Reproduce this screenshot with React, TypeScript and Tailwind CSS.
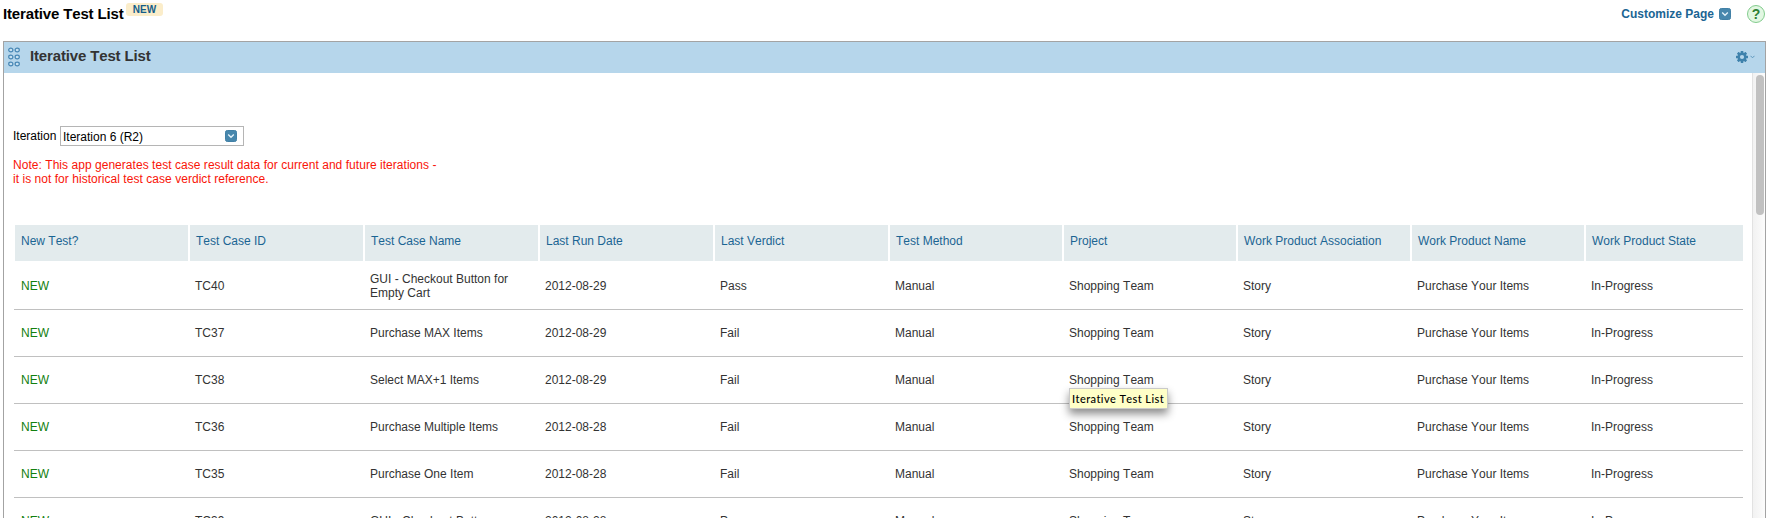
import React from "react";

const columns: [string, string][] = [
  ["New Test?", "w-[175px]"],
  ["Test Case ID", "w-[175px]"],
  ["Test Case Name", "w-[175px]"],
  ["Last Run Date", "w-[175px]"],
  ["Last Verdict", "w-[175px]"],
  ["Test Method", "w-[174px]"],
  ["Project", "w-[174px]"],
  ["Work Product Association", "w-[174px]"],
  ["Work Product Name", "w-[174px]"],
  ["Work Product State", "w-[159px]"],
];

const tests = [
  ["TC40", "GUI - Checkout Button for Empty Cart", "2012-08-29", "Pass"],
  ["TC37", "Purchase MAX Items", "2012-08-29", "Fail"],
  ["TC38", "Select MAX+1 Items", "2012-08-29", "Fail"],
  ["TC36", "Purchase Multiple Items", "2012-08-28", "Fail"],
  ["TC35", "Purchase One Item", "2012-08-28", "Fail"],
  ["TC39", "GUI - Checkout Button", "2012-08-28", "Pass"],
];

function DropIcon() {
  return (
    <svg width="12" height="12" viewBox="0 0 12 12" className="shrink-0">
      <rect x="0.5" y="0.5" width="11" height="11" rx="1.8" fill="#4787ad" stroke="#4180a6" />
      <path d="M3.2 4.6 6 7.2 8.8 4.6" fill="none" stroke="#e4f2fa" strokeWidth="1.4" />
    </svg>
  );
}

function Grip() {
  return (
    <svg width="12" height="20" viewBox="0 0 12 20" className="shrink-0">
      {[3, 10, 17].map((y) =>
        [2.8, 9.2].map((x) => (
          <ellipse key={`${x}-${y}`} cx={x} cy={y} rx="2.1" ry="1.8" fill="#c7e0f0" stroke="#4787b5" strokeWidth="1.2" />
        ))
      )}
    </svg>
  );
}

function Gear() {
  return (
    <svg width="12" height="12" viewBox="0 0 12 12" className="shrink-0">
      <g fill="#3f82ac">
        {[0, 45, 90, 135].map((a) => (
          <rect key={a} x="4.7" y="0" width="2.6" height="12" rx="0.4" transform={`rotate(${a} 6 6)`} />
        ))}
        <circle cx="6" cy="6" r="4.5" />
      </g>
      <circle cx="6" cy="6" r="2.1" fill="#b6d6eb" />
    </svg>
  );
}

export default function App() {
  return (
    <div className="h-[518px] w-[1769px] overflow-hidden bg-white font-['Liberation_Sans',Arial,sans-serif] text-[12px] leading-[14px] text-[#333] [font-kerning:none]">
      <header className="flex h-[41px] items-start pl-[3px] pr-[4px]">
        <h1 className="mt-[6px] w-[120px] text-[15px] leading-[16px] font-bold tracking-[-0.15px] whitespace-nowrap text-black">Iterative Test List</h1>
        <span className="mt-[3px] ml-[3px] flex h-[13px] w-[37px] items-center justify-center rounded-[3px] bg-[#fbedca] text-[10px] font-bold text-[#155d89]">
          NEW
        </span>
        <div className="ml-auto flex h-[28px] items-center">
          <span className="mr-[5px] text-[12px] font-bold text-[#1b6593]">Customize Page</span>
          <DropIcon />
          <span className="mb-[1px] ml-[16px] flex size-[18px] items-center justify-center rounded-full border border-[#83cc8d] bg-[#e2f7e2] text-[14px] font-bold text-[#2f7f35]">
            ?
          </span>
        </div>
      </header>

      <section className="ml-[3px] flex h-[477px] w-[1763px] flex-col border border-b-0 border-[#a3a3a3]">
        <div className="flex h-[31px] shrink-0 items-center bg-[#b6d6eb] pr-[10px] pb-[2px] pl-[4px]">
          <Grip />
          <h2 className="ml-[10px] pb-[1px] text-[15px] font-bold tracking-[-0.15px] text-[#333]">Iterative Test List</h2>
          <div className="ml-auto flex items-center gap-[2px]">
            <Gear />
            <svg width="5" height="4" viewBox="0 0 5 4">
              <path d="M0.5 0.8 2.5 2.8 4.5 0.8" fill="none" stroke="#5c97bd" />
            </svg>
          </div>
        </div>

        <div className="flex min-h-0 flex-1">
          <main className="flex min-w-0 flex-1 flex-col overflow-hidden pt-[53px] pl-[9px]">
            <div className="flex h-[20px] shrink-0 items-center text-black">
              <span className="w-[47px]">Iteration</span>
              <div className="flex h-[20px] w-[184px] items-center justify-between border border-[#b5b5b5] pr-[6px] pl-[2px]">
                <span className="pt-[2px]">Iteration 6 (R2)</span>
                <DropIcon />
              </div>
            </div>
            <p className="mt-[12px] shrink-0 tracking-[0.04px] text-[#f91408]">
              Note: This app generates test case result data for current and future iterations -
              <br />
              it is not for historical test case verdict reference.
            </p>
            <div className="mt-[39px] ml-[1px] flex w-[1729px] shrink-0 flex-col">
              <div className="flex h-[36px] w-[1729px] shrink-0">
                {columns.map(([name, width]) => (
                  <div key={name} className={`${width} shrink-0 border-l-2 border-white first:w-[174px] first:border-l-1`}>
                    <div className="flex h-full items-center bg-[#e3ebed] pb-[4px] pl-[6px] whitespace-nowrap text-[#1b6593]">{name}</div>
                  </div>
                ))}
              </div>
              <div className="h-[2px] shrink-0" />
              {tests.map(([id, name, date, verdict]) => (
                <div key={id} className="flex h-[47px] w-[1729px] shrink-0 items-center border-b border-[#c0c0c0] pb-[1px]">
                  {["NEW", id, name, date, verdict, "Manual", "Shopping Team", "Story", "Purchase Your Items", "In-Progress"].map((value, i) => (
                    <div key={columns[i][0]} className={`${columns[i][1]} shrink-0 pr-[20px] pl-[6px] first:pl-[7px] first:text-[#128010]`}>
                      {value}
                    </div>
                  ))}
                </div>
              ))}
            </div>
          </main>
          <div className="flex w-[13px] shrink-0 border-l border-[#e2e2e2] bg-linear-to-r from-[#f2f2f2] to-[#fcfcfc] pt-[2px] pl-[3px]">
            <div className="h-[140px] w-[8px] rounded-full bg-[#c1c1c1]" />
          </div>
        </div>
      </section>

      <div className="absolute top-[388px] left-[1069px] flex h-[21px] w-[99px] items-center border border-[#cacaca] bg-[#ffffc7] pl-[2px] font-['Lato',sans-serif] text-[11px] font-medium tracking-[0.4px] whitespace-nowrap text-black shadow-[0_5px_9px_rgba(0,0,0,0.45)]">
        Iterative Test List
      </div>
    </div>
  );
}
